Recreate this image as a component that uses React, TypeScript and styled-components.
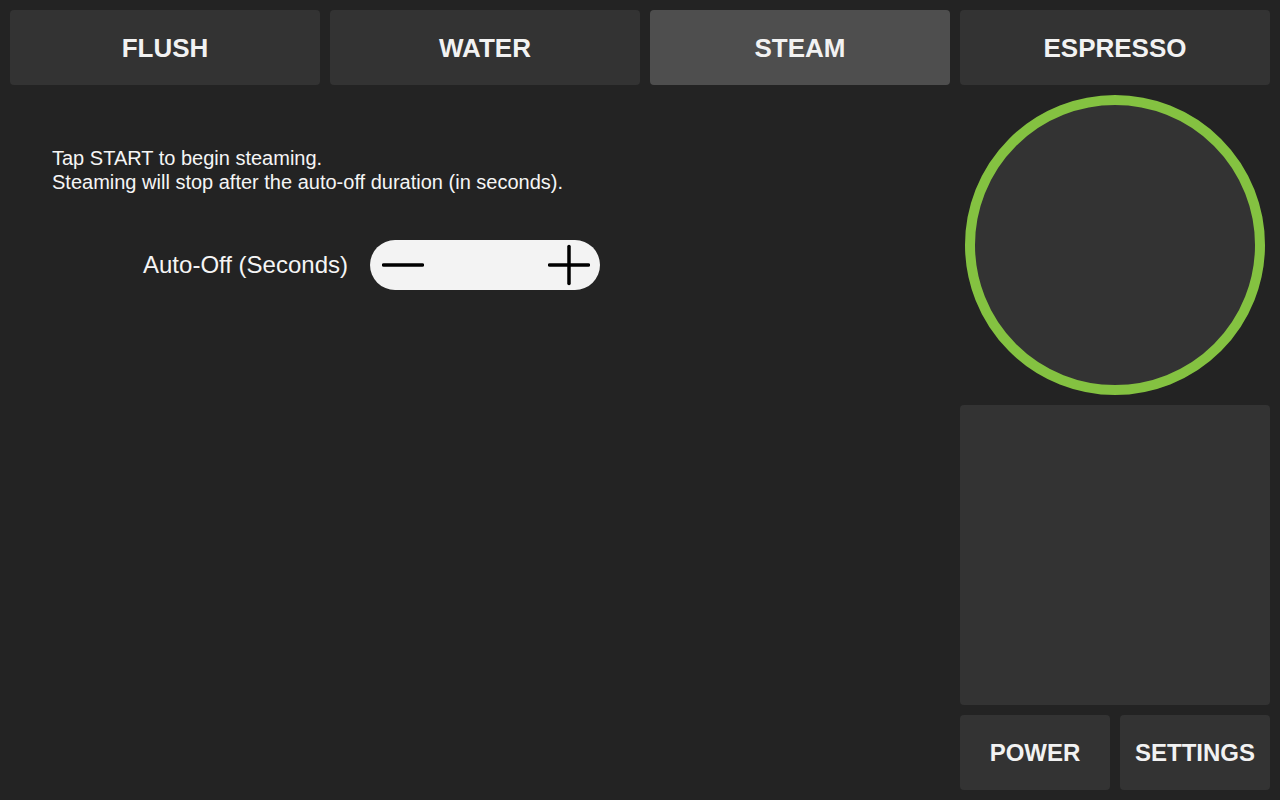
import React from "react";
import styled, { createGlobalStyle } from "styled-components";

const GlobalStyle = createGlobalStyle`
  html, body {
    margin: 0;
    padding: 0;
    background: #232323;
  }
  body {
    font-family: "Liberation Sans", Arial, Helvetica, sans-serif;
    color: #f2f2f2;
  }
  * { box-sizing: border-box; }
`;

const Page = styled.div`
  width: 1280px;
  height: 800px;
  padding: 10px;
  display: grid;
  grid-template-columns: 940px 310px;
  grid-template-rows: 75px 1fr;
  column-gap: 10px;
  row-gap: 0;
  background: #232323;
  overflow: hidden;
`;

const TabBar = styled.nav`
  grid-column: 1 / span 2;
  display: grid;
  grid-template-columns: 310px 310px 300px 310px;
  gap: 10px;
`;

const Tab = styled.button<{ $active?: boolean }>`
  border: none;
  border-radius: 4px;
  background: ${(p) => (p.$active ? "#4e4e4e" : "#333333")};
  color: #f2f2f2;
  font-family: "Liberation Sans", Arial, sans-serif;
  font-weight: 700;
  font-size: 26px;
  display: flex;
  align-items: center;
  justify-content: center;
  padding: 2px 0 0;
  cursor: pointer;
`;

const Main = styled.main`
  padding: 61px 0 0 42px;
  display: flex;
  flex-direction: column;
`;

const Description = styled.p`
  margin: 0;
  font-size: 20px;
  line-height: 24px;
  color: #f5f5f5;
`;

const SettingRow = styled.div`
  margin-top: 46px;
  display: flex;
  align-items: center;
  gap: 22px;
`;

const SettingLabel = styled.label`
  width: 296px;
  text-align: right;
  font-size: 24px;
  line-height: 28px;
  color: #f5f5f5;
`;

const Stepper = styled.div`
  width: 230px;
  height: 50px;
  border-radius: 25px;
  background: #f3f3f3;
  display: flex;
  align-items: center;
  justify-content: space-between;
  padding: 0 10px 0 12px;
`;

const StepButton = styled.button`
  width: 42px;
  height: 42px;
  border: none;
  background: transparent;
  padding: 0;
  display: flex;
  align-items: center;
  justify-content: center;
  cursor: pointer;
`;

const Side = styled.aside`
  display: flex;
  flex-direction: column;
  gap: 10px;
  padding-top: 10px;
`;

const GaugeWrap = styled.div`
  height: 300px;
  display: flex;
  justify-content: center;
`;

const Gauge = styled.div`
  width: 300px;
  height: 300px;
  border-radius: 50%;
  border: 10px solid #84c241;
  background: #333333;
`;

const Panel = styled.div`
  height: 300px;
  border-radius: 4px;
  background: #333333;
`;

const ButtonRow = styled.div`
  height: 75px;
  display: grid;
  grid-template-columns: 150px 150px;
  gap: 10px;
`;

const SideButton = styled.button`
  border: none;
  border-radius: 4px;
  background: #333333;
  color: #f2f2f2;
  font-family: "Liberation Sans", Arial, sans-serif;
  font-weight: 700;
  font-size: 24px;
  padding: 0;
  display: flex;
  align-items: center;
  justify-content: center;
  cursor: pointer;
`;

const MinusIcon = () => (
  <svg width="42" height="42" viewBox="0 0 42 42">
    <line x1="1.5" y1="21" x2="40.5" y2="21" stroke="#000" strokeWidth="3.5" strokeLinecap="round" />
  </svg>
);

const PlusIcon = () => (
  <svg width="42" height="42" viewBox="0 0 42 42">
    <line x1="1.5" y1="21" x2="40.5" y2="21" stroke="#000" strokeWidth="3.5" strokeLinecap="round" />
    <line x1="21" y1="2.5" x2="21" y2="39.5" stroke="#000" strokeWidth="3.5" strokeLinecap="round" />
  </svg>
);

const tabs = [
  { label: "FLUSH", active: false },
  { label: "WATER", active: false },
  { label: "STEAM", active: true },
  { label: "ESPRESSO", active: false },
];

export default function App() {
  return (
    <>
      <GlobalStyle />
      <Page>
        <TabBar>
          {tabs.map((t) => (
            <Tab key={t.label} $active={t.active}>
              {t.label}
            </Tab>
          ))}
        </TabBar>
        <Main>
          <Description>
            Tap START to begin steaming.
            <br />
            Steaming will stop after the auto-off duration (in seconds).
          </Description>
          <SettingRow>
            <SettingLabel>Auto-Off (Seconds)</SettingLabel>
            <Stepper>
              <StepButton aria-label="decrease">
                <MinusIcon />
              </StepButton>
              <StepButton aria-label="increase">
                <PlusIcon />
              </StepButton>
            </Stepper>
          </SettingRow>
        </Main>
        <Side>
          <GaugeWrap>
            <Gauge />
          </GaugeWrap>
          <Panel />
          <ButtonRow>
            <SideButton>POWER</SideButton>
            <SideButton>SETTINGS</SideButton>
          </ButtonRow>
        </Side>
      </Page>
    </>
  );
}
